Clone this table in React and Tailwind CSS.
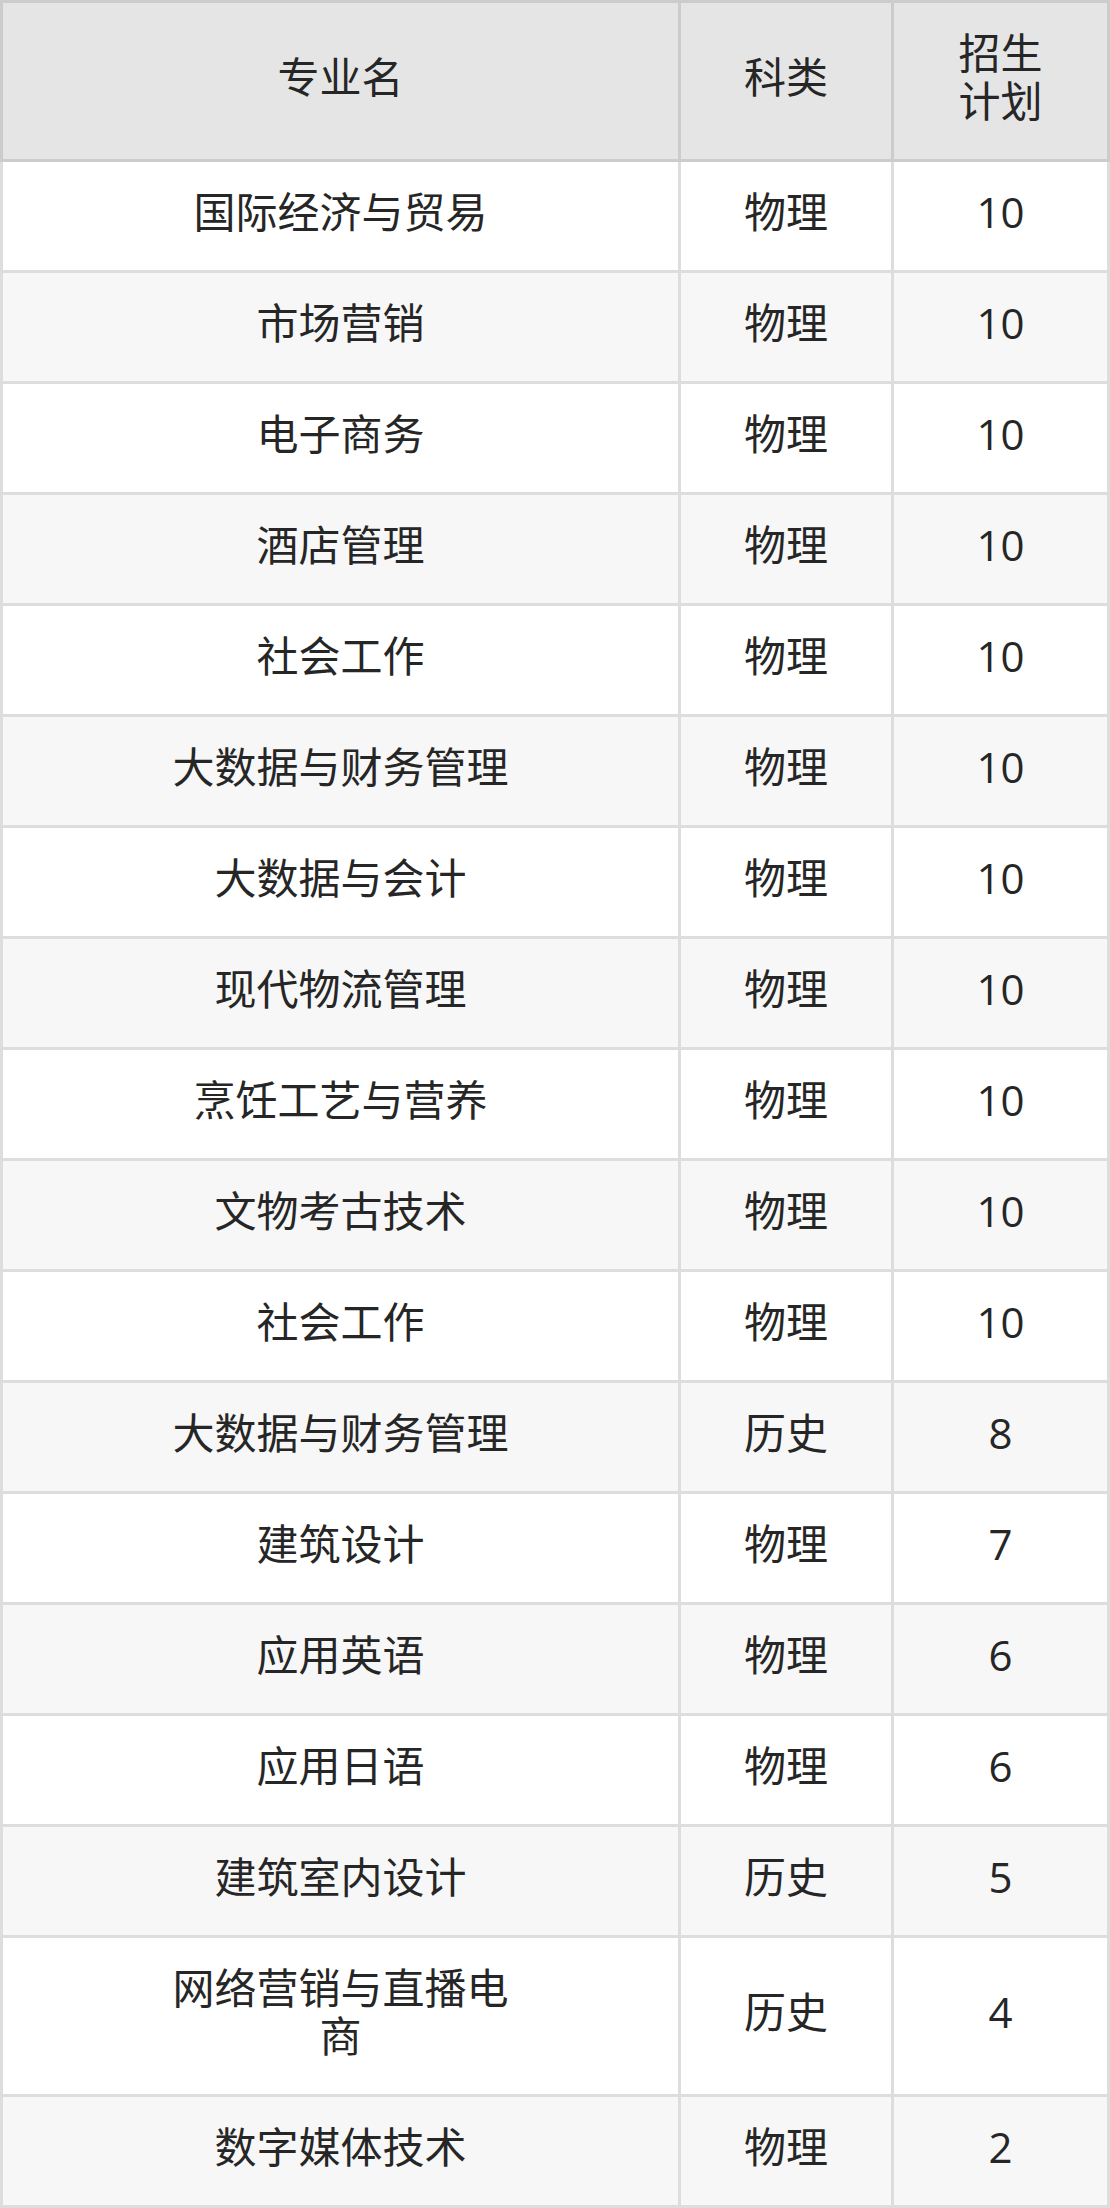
import React from "react";

const rows = [
  ["国际经济与贸易", "物理", "10"],
  ["市场营销", "物理", "10"],
  ["电子商务", "物理", "10"],
  ["酒店管理", "物理", "10"],
  ["社会工作", "物理", "10"],
  ["大数据与财务管理", "物理", "10"],
  ["大数据与会计", "物理", "10"],
  ["现代物流管理", "物理", "10"],
  ["烹饪工艺与营养", "物理", "10"],
  ["文物考古技术", "物理", "10"],
  ["社会工作", "物理", "10"],
  ["大数据与财务管理", "历史", "8"],
  ["建筑设计", "物理", "7"],
  ["应用英语", "物理", "6"],
  ["应用日语", "物理", "6"],
  ["建筑室内设计", "历史", "5"],
  [["网络营销与直播电", "商"], "历史", "4"],
  ["数字媒体技术", "物理", "2"],
];

function Text({ v }) {
  if (Array.isArray(v)) {
    return (
      <span>
        {v[0]}
        <br />
        {v[1]}
      </span>
    );
  }
  return <span>{v}</span>;
}

export default function App() {
  return (
    <div
      className="w-[1110px] text-[42px] leading-[48px] text-[#262626]"
      style={{ fontFamily: '"Open Sans", "Noto Sans CJK SC", sans-serif' }}
    >
      {/* header */}
      <div className="flex bg-[#e5e5e5]">
        <div className="w-[681px] h-[162px] pb-[8px] border-[3px] border-[#cccccc] flex items-center justify-center text-center">
          专业名
        </div>
        <div className="w-[213px] h-[162px] pb-[8px] border-y-[3px] border-r-[3px] border-[#cccccc] flex items-center justify-center text-center">
          科类
        </div>
        <div className="w-[216px] h-[162px] pb-[8px] border-y-[3px] border-r-[3px] border-[#cccccc] flex items-center justify-center text-center">
          <span>
            招生
            <br />
            计划
          </span>
        </div>
      </div>
      {rows.map((r, i) => {
        const tall = Array.isArray(r[0]);
        const bg = i % 2 === 0 ? "bg-white" : "bg-[#f7f7f7]";
        const h = tall ? "h-[159px]" : "h-[111px]";
        return (
          <div key={i} className={`flex ${bg}`}>
            <div
              className={`w-[681px] ${h} pb-[8px] border-l-[3px] border-r-[3px] border-b-[3px] border-[#dddddd] flex items-center justify-center text-center`}
            >
              <Text v={r[0]} />
            </div>
            <div
              className={`w-[213px] ${h} pb-[8px] border-r-[3px] border-b-[3px] border-[#dddddd] flex items-center justify-center text-center`}
            >
              {r[1]}
            </div>
            <div
              className={`w-[216px] ${h} pb-[8px] border-r-[3px] border-b-[3px] border-[#dddddd] flex items-center justify-center text-center`}
            >
              {r[2]}
            </div>
          </div>
        );
      })}
    </div>
  );
}
